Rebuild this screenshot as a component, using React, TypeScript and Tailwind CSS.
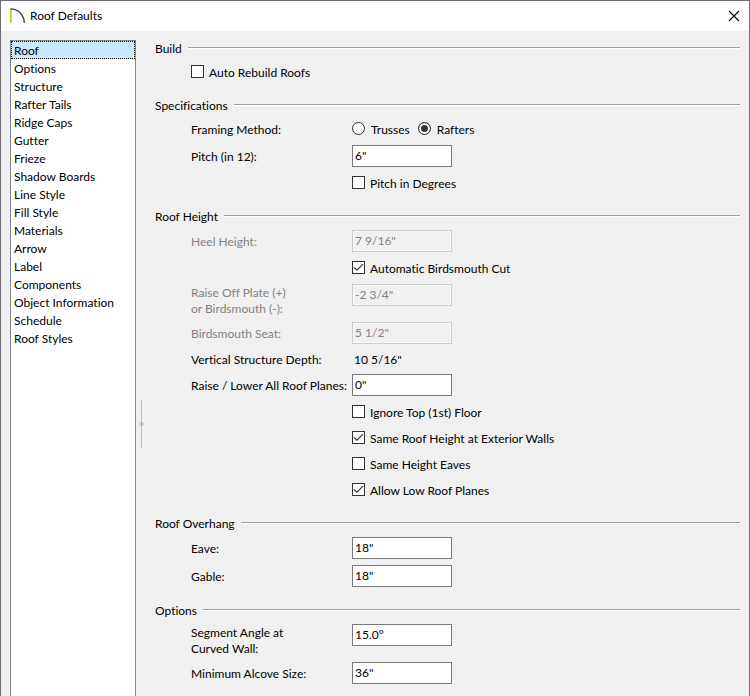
import React, { useState } from 'react';

const PAGES = [
  'Roof',
  'Options',
  'Structure',
  'Rafter Tails',
  'Ridge Caps',
  'Gutter',
  'Frieze',
  'Shadow Boards',
  'Line Style',
  'Fill Style',
  'Materials',
  'Arrow',
  'Label',
  'Components',
  'Object Information',
  'Schedule',
  'Roof Styles',
];

const SectionHeading: React.FC<{ title: string }> = ({ title }) => (
  <div className="flex items-center gap-1.5 h-4">
    <h2 className="leading-[18px] whitespace-nowrap">{title}</h2>
    <div className="flex-1 h-0.5 mb-0.5 bg-white border-t border-[#a0a0a0]"></div>
  </div>
);

interface FieldProps {
  id: string;
  label: React.ReactNode;
  value: string;
  disabled?: boolean;
  multiline?: boolean;
}

const Field: React.FC<FieldProps> = ({ id, label, value, disabled, multiline }) => {
  const [text, setText] = useState(value);

  return (
    <div className={`flex pl-9 ${multiline ? 'items-start h-8' : 'items-center'}`}>
      <label
        htmlFor={id}
        className={`w-[161px] shrink-0 leading-4 whitespace-nowrap ${multiline ? 'pt-px' : 'pt-0.5'} ${
          disabled ? 'text-[#838383]' : ''
        }`}
      >
        {label}
      </label>
      <input
        id={id}
        type="text"
        value={text}
        disabled={disabled}
        onChange={(e) => setText(e.target.value)}
        className="w-[100px] h-[22px] px-0.5 pb-0.5 leading-4 bg-white border border-[#7a7a7a] outline-none focus:border-[#0078d7] disabled:bg-[#f0f0f0] disabled:border-[#cccccc] disabled:text-[#838383] disabled:shadow-[inset_0_0_0_1px_#f8f8f8]"
      />
    </div>
  );
};

const Checkbox: React.FC<{ label: string; defaultChecked?: boolean }> = ({ label, defaultChecked }) => {
  const [checked, setChecked] = useState(!!defaultChecked);

  return (
    <label className="flex items-center gap-[5px] h-4 w-fit">
      <span className="grid mb-px">
        <input
          type="checkbox"
          checked={checked}
          onChange={(e) => setChecked(e.target.checked)}
          className="appearance-none col-start-1 row-start-1 w-[13px] h-[13px] bg-white border border-[#333333]"
        />
        {checked && (
          <svg viewBox="0 0 13 13" className="col-start-1 row-start-1 w-[13px] h-[13px] pointer-events-none" aria-hidden="true">
            <path d="M2 6.3 4.9 9.2 11 3.1" fill="none" stroke="#333333" strokeWidth="1.2" />
          </svg>
        )}
      </span>
      <span className="pt-0.5 leading-4 whitespace-nowrap">{label}</span>
    </label>
  );
};

const App: React.FC = () => {
  const [page, setPage] = useState('Roof');
  const [framing, setFraming] = useState('Rafters');

  return (
    <div className="min-h-screen flex flex-col bg-[#f0f0f0] border border-b-0 border-[#6e6c70] text-black text-[12px] font-['Lato','Open_Sans',sans-serif] [font-variant-ligatures:none]">
      <header className="flex items-center h-[30px] pl-[9px] pr-[9px] bg-white">
        <svg viewBox="0 0 16 16" className="w-4 h-4 mr-1" aria-hidden="true">
          <path d="M.8 1.5V15" fill="none" stroke="#9acd32" strokeWidth="1.5" />
          <path d="M.3 .9C8 .9 14 6.5 14.3 15" fill="none" stroke="#3c3c3c" strokeWidth="1.3" />
        </svg>
        <h1 className="flex-1 leading-4">Roof Defaults</h1>
        <button type="button" aria-label="Close">
          <svg viewBox="0 0 12 12" className="w-3 h-3" aria-hidden="true">
            <path d="M1 1 11 11M11 1 1 11" fill="none" stroke="#000000" strokeWidth="1.1" />
          </svg>
        </button>
      </header>

      <div className="flex flex-1 pl-[9px] pr-[9px]">
        <nav className="w-[126px] shrink-0 mt-[9px] bg-white border border-b-0 border-[#828790]">
          <ul>
            {PAGES.map((name) => (
              <li key={name}>
                <button
                  type="button"
                  onClick={() => setPage(name)}
                  className={`block w-full h-[18px] px-0.5 pt-px leading-[15px] text-left border border-dotted ${
                    page === name ? 'bg-[#cce8ff] border-black' : 'border-transparent'
                  }`}
                >
                  {name}
                </button>
              </li>
            ))}
          </ul>
        </nav>

        {/* Splitter grip */}
        <div className="w-[19px] shrink-0 pt-[369px] pl-[3px]">
          <svg viewBox="0 0 5 48" className="w-[5px] h-12" aria-hidden="true">
            <path d="M2.5 0V48" stroke="#c0c0c0" />
            <circle cx="2.5" cy="24" r="2.2" fill="#c0c0c0" />
          </svg>
        </div>

        <form className="flex-1 min-w-0 flex flex-col gap-[18px] pt-[10px] pb-3">
          <section>
            <SectionHeading title="Build" />
            <div className="mt-[7px] pl-9">
              <Checkbox label="Auto Rebuild Roofs" />
            </div>
          </section>

          <section>
            <SectionHeading title="Specifications" />
            <div className="mt-[7px] flex flex-col gap-2">
              <div role="radiogroup" aria-labelledby="framing" className="flex items-center h-4 pl-9">
                <span id="framing" className="w-[161px] shrink-0 pt-0.5 leading-4">Framing Method:</span>
                <div className="flex gap-2">
                  {['Trusses', 'Rafters'].map((name) => (
                    <label key={name} className="flex items-center gap-1.5 h-4">
                      <input
                        type="radio"
                        name="framing"
                        checked={framing === name}
                        onChange={() => setFraming(name)}
                        className="appearance-none w-[13px] h-[13px] mb-px rounded-full border border-[#333333] bg-white checked:bg-[#333333] checked:shadow-[inset_0_0_0_2px_#ffffff]"
                      />
                      <span className="pt-0.5 leading-4">{name}</span>
                    </label>
                  ))}
                </div>
              </div>
              <Field id="pitch" label="Pitch (in 12):" value={'6"'} />
              <div className="pl-[197px]">
                <Checkbox label="Pitch in Degrees" />
              </div>
            </div>
          </section>

          <section>
            <SectionHeading title="Roof Height" />
            <div className="mt-[5px] flex flex-col gap-2">
              <Field id="heel" label="Heel Height:" value={'7 9/16"'} disabled />
              <div className="pl-[197px]">
                <Checkbox label="Automatic Birdsmouth Cut" defaultChecked />
              </div>
              <div className="flex flex-col gap-1.5">
                <Field
                  id="raise-off"
                  label={<>Raise Off Plate (+)<br />or Birdsmouth (-):</>}
                  value={'-2 3/4"'}
                  disabled
                  multiline
                />
                <Field id="seat" label="Birdsmouth Seat:" value={'5 1/2"'} disabled />
              </div>
              <div className="flex flex-col gap-1.5">
                <div className="flex pl-9 leading-4">
                  <span className="w-[163px] shrink-0 whitespace-nowrap">Vertical Structure Depth:</span>
                  <output>10 5/16"</output>
                </div>
                <Field id="raise-all" label="Raise / Lower All Roof Planes:" value={'0"'} />
              </div>
              <div className="flex flex-col gap-[10px] pl-[197px]">
                <Checkbox label="Ignore Top (1st) Floor" />
                <Checkbox label="Same Roof Height at Exterior Walls" defaultChecked />
                <Checkbox label="Same Height Eaves" />
                <Checkbox label="Allow Low Roof Planes" defaultChecked />
              </div>
            </div>
          </section>

          <section>
            <SectionHeading title="Roof Overhang" />
            <div className="mt-[5px] flex flex-col gap-1.5">
              <Field id="eave" label="Eave:" value={'18"'} />
              <Field id="gable" label="Gable:" value={'18"'} />
            </div>
          </section>

          <section className="-mt-0.5">
            <SectionHeading title="Options" />
            <div className="mt-[5px] flex flex-col gap-1.5">
              <Field
                id="segment"
                label={<>Segment Angle at<br />Curved Wall:</>}
                value="15.0°"
                multiline
              />
              <Field id="alcove" label="Minimum Alcove Size:" value={'36"'} />
            </div>
          </section>
        </form>
      </div>
    </div>
  );
};

export default App;
